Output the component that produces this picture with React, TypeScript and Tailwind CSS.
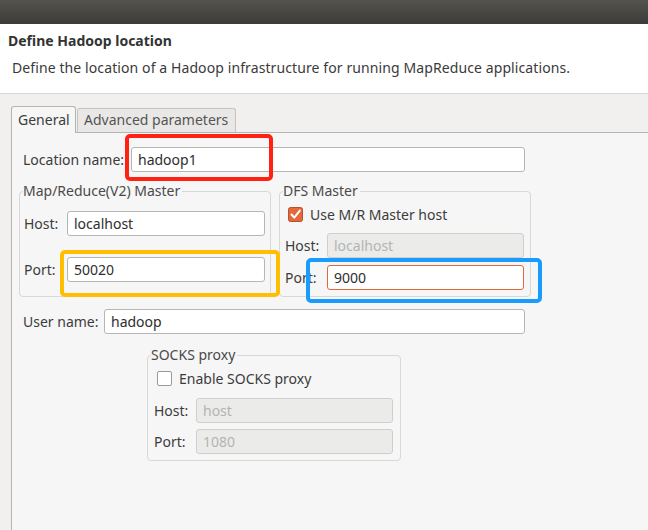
import type { ReactNode } from 'react';

function Field({ value, disabled, focused, className }: { value: string; disabled?: boolean; focused?: boolean; className: string }) {
  return (
    <div
      className={
        'flex items-center h-[25px] rounded-[3px] border pl-[6px] ' +
        (disabled
          ? 'bg-[#ebebea] border-[#cfcfcd] text-[#b4b4b2] '
          : focused
            ? 'bg-white border-[#e0683a] text-[#2e2e2e] '
            : 'bg-white border-[#b6b6b3] text-[#2e2e2e] ') +
        className
      }
    >
      {value}
    </div>
  );
}

function Group({ title, className, children }: { title: string; className: string; children: ReactNode }) {
  return (
    <fieldset className={'border border-[#d8d8d6] rounded-[4px] ' + className}>
      <legend className="ml-[3px] pr-[2px] text-[#4a4a4a] leading-[14px]">{title}</legend>
      {children}
    </fieldset>
  );
}

function Check({ checked }: { checked?: boolean }) {
  if (checked) {
    return (
      <svg width="15" height="15" viewBox="0 0 15 15" className="shrink-0">
        <rect x="0.5" y="0.5" width="14" height="14" rx="2" fill="#e3683b" stroke="#b9502a" />
        <path d="M3.5 7.5 L6.3 10.6 L11.8 3.6" fill="none" stroke="#ffffff" strokeWidth="2" strokeLinecap="round" strokeLinejoin="round" />
      </svg>
    );
  }
  return <div className="w-[15px] h-[15px] shrink-0 rounded-[2px] border border-[#9a9a98] bg-white" />;
}

export default function App() {
  return (
    <div className="relative w-[648px] h-[530px] overflow-hidden bg-[#f1f0ef] text-[14px] text-[#3c3c3c]" style={{ fontFamily: '"Noto Sans", "Open Sans", sans-serif' }}>
      {/* window title bar */}
      <div className="h-[24px] bg-gradient-to-b from-[#55534e] to-[#3c3b37]" />

      {/* dialog header */}
      <div className="h-[70px] bg-white border-b border-[#d6d6d4] pl-[8px] pt-[7px]">
        <div className="font-bold text-[#333] leading-[20px]">Define Hadoop location</div>
        <div className="pl-[4px] mt-[7px] leading-[20px] tracking-[0.1px] text-[#3a3a3a]">Define the location of a Hadoop infrastructure for running MapReduce applications.</div>
      </div>

      {/* tab folder */}
      <div className="pl-[11px] pt-[11px]">
        <div className="flex items-end h-[27px]">
          <div className="h-[27px] w-[65px] rounded-t-[3px] border border-b-0 border-[#b4b4b2] bg-[#f6f6f6] pl-[6px] pt-[4px] leading-[18px] text-[#3c3c3c] relative z-10 -mb-px">General</div>
          <div className="h-[24px] w-[159px] ml-px rounded-t-[3px] border border-b-0 border-[#c4c4c2] bg-[#e9e8e7] pl-[6px] pt-[2px] leading-[18px] text-[#555]">Advanced parameters</div>
        </div>
        <div className="h-[410px] border-l border-t border-[#b4b4b2] bg-[#f6f6f6] pl-[7px] pt-[14px]">
          <div className="flex items-center pl-[4px]">
            <span className="w-[108px]">Location name:</span>
            <Field value="hadoop1" className="w-[394px]" />
          </div>

          <div className="flex gap-[8px] mt-[12px]">
            <Group title="Map/Reduce(V2) Master" className="w-[252px] h-[113px]">
              <div className="pl-[4px]">
                <div className="flex items-center mt-[13px]">
                  <span className="w-[43px]">Host:</span>
                  <Field value="localhost" className="w-[198px]" />
                </div>
                <div className="flex items-center mt-[21px]">
                  <span className="w-[43px]">Port:</span>
                  <Field value="50020" className="w-[198px]" />
                </div>
              </div>
            </Group>
            <Group title="DFS Master" className="w-[252px] h-[113px]">
              <div className="pl-[5px]">
                <div className="flex items-center gap-[7px] mt-[7px] pl-[3px] h-[18px]">
                  <Check checked />
                  <span>Use M/R Master host</span>
                </div>
                <div className="flex items-center mt-[10px]">
                  <span className="w-[42px]">Host:</span>
                  <Field value="localhost" disabled className="w-[197px]" />
                </div>
                <div className="flex items-center mt-[7px]">
                  <span className="w-[42px]">Port:</span>
                  <Field value="9000" focused className="w-[197px]" />
                </div>
              </div>
            </Group>
          </div>

          <div className="flex items-center pl-[4px] mt-[12px]">
            <span className="w-[81px]">User name:</span>
            <Field value="hadoop" className="w-[421px]" />
          </div>

          <div className="pl-[128px] mt-[14px]">
            <Group title="SOCKS proxy" className="w-[254px] h-[113px]">
              <div className="pl-[6px]">
                <div className="flex items-center gap-[7px] mt-[7px] pl-[3px] h-[18px]">
                  <Check />
                  <span>Enable SOCKS proxy</span>
                </div>
                <div className="flex items-center mt-[11px]">
                  <span className="w-[42px]">Host:</span>
                  <Field value="host" disabled className="w-[197px]" />
                </div>
                <div className="flex items-center mt-[6px]">
                  <span className="w-[42px]">Port:</span>
                  <Field value="1080" disabled className="w-[197px]" />
                </div>
              </div>
            </Group>
          </div>
        </div>
      </div>

      {/* annotation boxes drawn over the dialog */}
      <div className="absolute left-[125px] top-[134px] w-[148px] h-[47px] border-[4px] border-[#ff2213] rounded-[5px]" />
      <div className="absolute left-[60px] top-[250px] w-[220px] h-[47px] border-[4px] border-[#ffbf00] rounded-[5px]" />
      <div className="absolute left-[306px] top-[258px] w-[236px] h-[45px] border-[4px] border-[#1a9cff] rounded-[5px]" />
    </div>
  );
}
